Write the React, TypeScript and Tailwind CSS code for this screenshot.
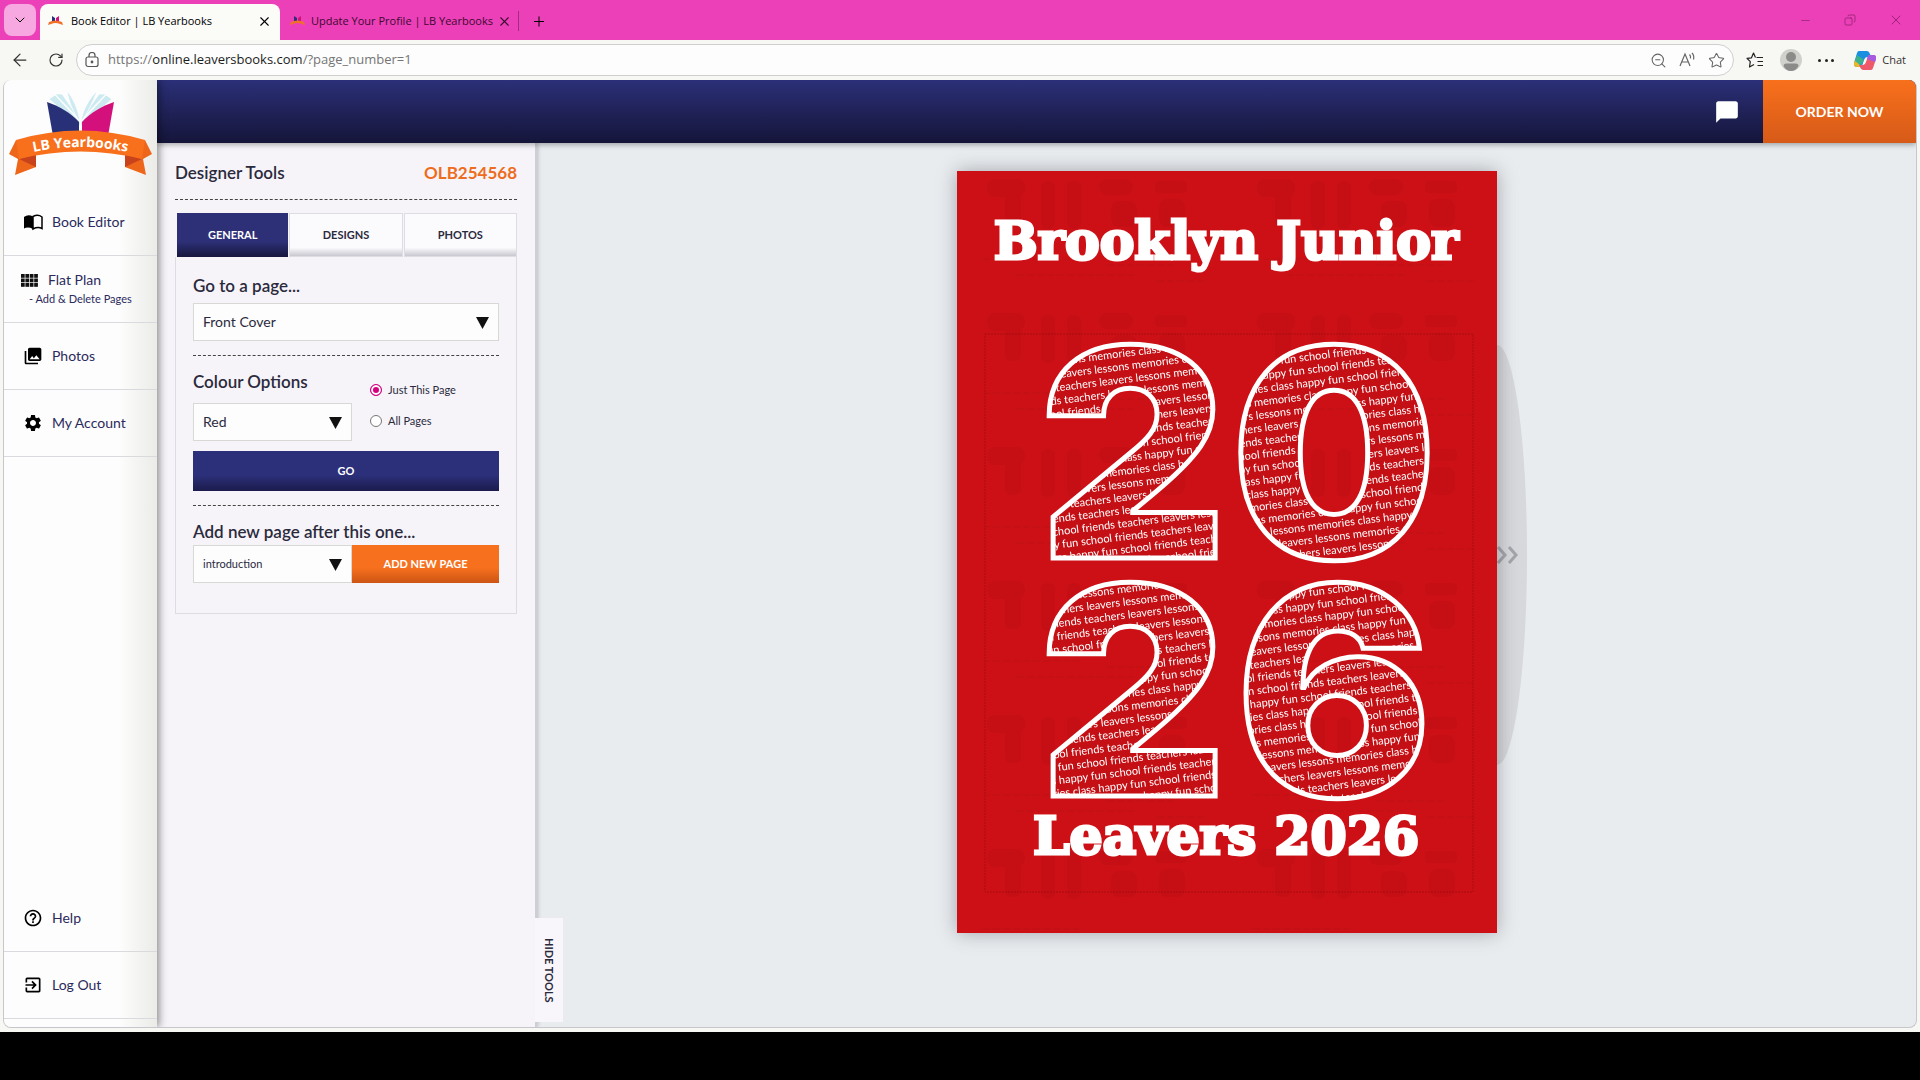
import { useState } from 'react';
import type { ReactNode } from 'react';
import { ArrowLeft, ChevronDown, Copy, Minus, Plus, RotateCw, Star, X, ZoomOut } from 'lucide-react';
import { MdChatBubble, MdExitToApp, MdHelpOutline, MdPhotoLibrary, MdSettings } from 'react-icons/md';

const WORDS = ['memories', 'class', 'happy', 'fun', 'school', 'friends', 'teachers', 'leavers', 'lessons'];
const ROWS = Array.from({ length: 42 }, (_, i) => i);

// each row starts one word earlier than the one above it
function wordRow(row: number) {
  const start = WORDS.length - (row % WORDS.length);
  return Array.from({ length: 14 }, (_, i) => WORDS[(start + i) % WORDS.length]).join(' ');
}

const TOOL_TABS = ['GENERAL', 'DESIGNS', 'PHOTOS'];

export default function App() {
  return (
    <div className="flex h-screen min-h-[800px] flex-col bg-black pb-12 font-['Lato',sans-serif] text-[#2b2a3d]">
      <TabStrip />
      <AddressBar />
      <div className="flex min-h-0 flex-1 bg-[#f7f7f3] px-[3px] pb-1">
        <div className="flex min-w-0 flex-1 overflow-hidden rounded-lg border border-t-0 border-[#c6c6cc] bg-[#e9ecef]">
          <Sidebar />
          <div className="flex min-w-0 flex-1 flex-col">
            <TopBar />
            <main className="flex min-h-0 flex-1">
              <DesignerTools />
              <Canvas />
            </main>
          </div>
        </div>
      </div>
    </div>
  );
}

function TabStrip() {
  return (
    <div className="flex h-10 shrink-0 items-end bg-[#ec40b8] font-['Open_Sans',sans-serif] text-[11px] text-black">
      <div className="flex h-10 w-10 items-center pl-1">
        <button aria-label="Tab actions" className="flex h-8 w-8 items-center justify-center rounded-lg bg-[#f7a8e0]">
          <ChevronDown size={16} strokeWidth={1.5} />
        </button>
      </div>
      <div className="flex h-9 w-60 items-center gap-2 rounded-t-lg bg-[#fbfbf8] px-2 pb-[2px]">
        <Favicon />
        <span className="flex-1 whitespace-nowrap">Book Editor | LB Yearbooks</span>
        <button aria-label="Close tab" className="flex w-4 justify-center">
          <X size={15} strokeWidth={1.75} />
        </button>
      </div>
      <div className="flex h-9 w-[238px] items-center gap-[6px] pb-[2px] pl-[10px] text-[#3d0a30]">
        <Favicon />
        <span className="whitespace-nowrap">Update Your Profile | LB Yearbooks</span>
        <button aria-label="Close tab" className="flex w-3 justify-center">
          <X size={15} strokeWidth={1.75} className="shrink-0" />
        </button>
      </div>
      <div className="flex h-9 items-center gap-3 pb-[2px]">
        <span className="h-5 w-px bg-[#a32a80]" />
        <button aria-label="New tab" className="flex w-4 justify-center">
          <Plus size={17} strokeWidth={1.5} />
        </button>
      </div>
      <div className="ml-auto flex h-10 items-center gap-8 pr-4 text-[#8f1d6e]">
        <button aria-label="Minimise"><Minus size={13} strokeWidth={1.25} /></button>
        <button aria-label="Restore"><Copy size={12} strokeWidth={1.5} className="-scale-x-100" /></button>
        <button aria-label="Close window"><X size={16} strokeWidth={1.25} /></button>
      </div>
    </div>
  );
}

function AddressBar() {
  return (
    <div className="flex h-10 shrink-0 items-center bg-[#f7f7f3] font-['Open_Sans',sans-serif] text-[#333]">
      <button aria-label="Back" className="flex w-10 justify-center">
        <ArrowLeft size={20} strokeWidth={1.5} />
      </button>
      <button aria-label="Refresh" className="mr-1 flex w-8 justify-center">
        <RotateCw size={16} strokeWidth={1.75} />
      </button>
      <div className="flex h-8 flex-1 items-center rounded-full border border-[#cfcfcf] bg-[#fdfdfd] px-2">
        <LockIcon />
        <a href="https://online.leaversbooks.com/?page_number=1" className="ml-[9px] text-[13px] text-[#757575]">
          https://<span className="text-[#1b1b1b]">online.leaversbooks.com</span>/?page_number=1
        </a>
        <div className="ml-auto flex items-center gap-3 text-[#666]">
          <button aria-label="Zoom out"><ZoomOut size={17} strokeWidth={1.5} /></button>
          <button aria-label="Read aloud"><ReadAloudIcon /></button>
          <button aria-label="Add to favourites"><Star size={17} strokeWidth={1.5} /></button>
        </div>
      </div>
      <div className="flex items-center gap-4 pl-3 pr-[14px]">
        <button aria-label="Favourites"><FavouritesIcon /></button>
        <button aria-label="Profile"><AvatarIcon /></button>
        <button aria-label="More" className="flex w-4 justify-between">
          <span className="h-[3px] w-[3px] rounded-full bg-[#222]" />
          <span className="h-[3px] w-[3px] rounded-full bg-[#222]" />
          <span className="h-[3px] w-[3px] rounded-full bg-[#222]" />
        </button>
        <button className="flex items-center gap-[6px] pl-1 text-[11px]">
          <CopilotIcon />
          Chat
        </button>
      </div>
    </div>
  );
}

function Sidebar() {
  return (
    <nav className="relative z-20 flex w-[153px] shrink-0 flex-col bg-gradient-to-r from-[#fdfdfd] from-75% to-[#ebebe8] text-sm text-[#2b2a5c] shadow-[2px_0_8px_rgba(0,0,0,0.45)]">
      <a href="#home" aria-label="LB Yearbooks" className="flex h-[109px] pl-[5px] pt-[10px]">
        <Logo />
      </a>
      <SideLink label="Book Editor" icon={<BookIcon />} />
      <a href="#flat-plan" className="flex h-[67px] flex-col justify-center border-b border-[#d9d9de] pl-[17px]">
        <span className="flex items-center gap-[10px]">
          <GridIcon />
          Flat Plan
        </span>
        <span className="pl-2 text-[11px] leading-[18px]">- Add &amp; Delete Pages</span>
      </a>
      <SideLink label="Photos" icon={<MdPhotoLibrary size={20} />} />
      <SideLink label="My Account" icon={<MdSettings size={20} />} />
      <div className="mb-2 mt-auto">
        <SideLink label="Help" icon={<MdHelpOutline size={20} />} />
        <SideLink label="Log Out" icon={<MdExitToApp size={20} />} />
      </div>
    </nav>
  );
}

function SideLink({ label, icon }: { label: string; icon: ReactNode }) {
  return (
    <a href={'#' + label} className="flex h-[67px] items-center gap-[9px] border-b border-[#d9d9de] pl-[19px]">
      <span className="text-black">{icon}</span>
      {label}
    </a>
  );
}

function TopBar() {
  return (
    <header className="z-10 flex h-[63px] shrink-0 justify-end bg-gradient-to-b from-[#2b3078] to-[#15153a] shadow-[0_2px_5px_rgba(0,0,0,0.3)]">
      <button aria-label="Messages" className="mr-[23px] text-white">
        <MdChatBubble size={26} />
      </button>
      <button className="w-[153px] bg-gradient-to-b from-[#f8701c] to-[#d65a18] text-sm font-bold text-white">
        ORDER NOW
      </button>
    </header>
  );
}

function DesignerTools() {
  const [tab, setTab] = useState('GENERAL');
  const [scope, setScope] = useState('page');

  return (
    <aside className="relative w-[380px] shrink-0 border-r-2 border-[#cfced6] bg-[#f6f4f8] px-[18px] pt-[17px] shadow-[1px_0_4px_rgba(0,0,0,0.2)]">
      <div className="flex items-center justify-between border-b border-dashed border-[#444] pb-[13px] leading-[26px]">
        <h1 className="text-[17px] font-semibold">Designer Tools</h1>
        <span className="text-[17px] font-bold text-[#ee6c20]">OLB254568</span>
      </div>

      <div className="mt-[13px] flex h-11 gap-px pl-[2px]">
        {TOOL_TABS.map((name) => (
          <button
            key={name}
            onClick={() => setTab(name)}
            className={
              tab === name
                ? 'flex-1 bg-gradient-to-b from-[#2d3077] from-65% to-[#17173f] text-[11px] font-bold text-white'
                : 'flex-1 border border-[#dedde4] bg-gradient-to-b from-[#fbfafc] from-80% to-[#c9c8d0] text-[11px] font-bold'
            }
          >
            {name}
          </button>
        ))}
      </div>

      <div className="border border-t-0 border-[#dddce2] px-[17px] pb-[30px]">
        <label htmlFor="goto" className="block pb-1 pt-4 text-[17px] font-semibold leading-[26px]">
          Go to a page...
        </label>
        <SelectBox id="goto" options={['Front Cover', 'Back Cover']} size="text-sm" />

        <div className="mt-[14px] flex justify-between border-t border-dashed border-[#444] pt-[13px]">
          <div className="w-[159px]">
            <label htmlFor="colour" className="mb-2 block text-[17px] font-semibold leading-[26px]">
              Colour Options
            </label>
            <SelectBox id="colour" options={['Red', 'Blue', 'Green']} size="text-sm" />
          </div>
          <div className="flex w-[129px] flex-col gap-[11px] pt-[11px] text-[11px]">
            <ScopeRadio id="this" label="Just This Page" checked={scope === 'page'} onPick={() => setScope('page')} />
            <ScopeRadio id="all" label="All Pages" checked={scope === 'all'} onPick={() => setScope('all')} />
          </div>
        </div>

        <button className="mt-[10px] h-10 w-full bg-gradient-to-b from-[#2c307a] from-60% to-[#1b1b4c] text-[11px] font-bold text-white">
          GO
        </button>

        <div className="mt-[14px] border-t border-dashed border-[#444] pt-[13px]">
          <label htmlFor="newpage" className="block text-[17px] font-semibold leading-[26px]">
            Add new page after this one...
          </label>
          <div className="flex">
            <div className="w-[159px]">
              <SelectBox id="newpage" options={['introduction', 'memories', 'autographs']} size="text-[11px]" />
            </div>
            <button className="flex-1 bg-gradient-to-b from-[#f7701d] from-60% to-[#cc5514] text-[11px] font-bold text-white">
              ADD NEW PAGE
            </button>
          </div>
        </div>
      </div>

      <button className="absolute bottom-[5px] left-full flex h-[104px] w-7 items-center justify-center bg-[#f8f6fa] text-[11px] font-bold [writing-mode:vertical-rl]">
        HIDE TOOLS
      </button>
    </aside>
  );
}

function SelectBox({ id, options, size }: { id: string; options: string[]; size: string }) {
  return (
    <div className="relative">
      <select
        id={id}
        className={'block h-[38px] w-full appearance-none border border-[#d8d8d4] bg-[#fdfdfd] px-[9px] ' + size}
      >
        {options.map((o) => (
          <option key={o}>{o}</option>
        ))}
      </select>
      <svg width="13" height="12" viewBox="0 0 13 12" className="pointer-events-none absolute right-[10px] top-[14px]">
        <path d="M0 0h13L6.500 12z" fill="#111" />
      </svg>
    </div>
  );
}

interface ScopeProps {
  id: string;
  label: string;
  checked: boolean;
  onPick: () => void;
}

function ScopeRadio({ id, label, checked, onPick }: ScopeProps) {
  return (
    <div className="flex h-5 items-center gap-[6px]">
      <input
        id={id}
        type="radio"
        name="scope"
        checked={checked}
        onChange={onPick}
        className="h-3 w-3 appearance-none rounded-full border border-[#777] bg-white checked:border-[#d6007f] checked:bg-[#d6007f] checked:shadow-[inset_0_0_0_2px_#fff]"
      />
      <label htmlFor={id}>{label}</label>
    </div>
  );
}

function Canvas() {
  return (
    <section className="min-w-0 flex-1 overflow-hidden pt-7">
      <div className="relative mx-auto w-[540px]">
        <button
          aria-label="Next page"
          className="absolute left-full top-[174px] flex h-[420px] w-[30px] items-center bg-[#d6d8db] text-[#a3a5ab] [border-radius:0_100%_100%_0_/_0_50%_50%_0]"
        >
          <svg width="22" height="18" viewBox="0 0 22 18" fill="none" stroke="currentColor" strokeWidth="3">
            <path d="M1 1l7 8-7 8M12 1l7 8-7 8" />
          </svg>
        </button>
        <Cover />
      </div>
    </section>
  );
}

function Cover() {
  return (
    <div className="relative bg-[#cd1016] shadow-[0_0_18px_rgba(60,60,70,0.4)]">
      <svg viewBox="0 0 540 762" className="block w-full">
        <defs>
          <clipPath id="year">
            <YearDigits />
          </clipPath>
          {/* faint worn texture of the cover */}
          <pattern id="wash" width="270" height="134" patternUnits="userSpaceOnUse">
            <g fill="#c50f15">
              <rect x="30" y="8" width="38" height="18" rx="8" />
              <rect x="48" y="20" width="16" height="36" rx="6" />
              <rect x="84" y="10" width="14" height="48" rx="6" />
              <rect x="110" y="10" width="14" height="48" rx="6" />
              <rect x="142" y="8" width="34" height="16" rx="8" />
              <rect x="154" y="30" width="26" height="26" rx="8" />
              <rect x="198" y="10" width="32" height="12" rx="4" />
              <rect x="202" y="28" width="26" height="28" rx="8" />
            </g>
            <g stroke="#bd0f14" strokeWidth="1" strokeDasharray="7 3">
              <path d="M26 88h96M150 94h70M60 104h120M200 110h50" />
            </g>
          </pattern>
        </defs>

        <rect width="540" height="762" fill="url(#wash)" />
        <rect x="28" y="163" width="488" height="558" fill="none" stroke="#a90c11" strokeDasharray="2 1" />

        <g clipPath="url(#year)">
          <rect x="70" y="160" width="410" height="480" fill="#c40f15" />
          <g transform="rotate(-7 270 400)" fill="#fff" fontFamily="Lato" fontSize="11">
            {ROWS.map((r) => (
              <text key={r} x={40 + (r % 3) * 6} y={136 + r * 13}>{wordRow(r)}</text>
            ))}
          </g>
        </g>
        <g fill="none" stroke="#fff" strokeWidth="5">
          <YearDigits />
        </g>

        <g fill="#fff" stroke="#fff" strokeWidth="3" fontFamily="DejaVu Serif" fontWeight="bold" textAnchor="middle">
          <text x="269" y="88" fontSize="52">Brooklyn Junior</text>
          <text x="269" y="683" fontSize="52">Leavers 2026</text>
        </g>
      </svg>
    </div>
  );
}

// a clipPath only takes text as a direct child, so no group here
function YearDigits() {
  const font = { fontFamily: 'Inter', fontWeight: 900, fontSize: 290, textAnchor: 'middle' } as const;
  return (
    <>
      <text x="176" y="387" {...font}>2</text>
      <text x="377" y="387" {...font}>0</text>
      <text x="176" y="625" {...font}>2</text>
      <text x="377" y="625" {...font}>6</text>
    </>
  );
}

function Logo() {
  return (
    <svg width="143" height="88" viewBox="0 0 143 88">
      <g fill="#cdeaf0" stroke="#fff" strokeWidth="0.7">
        <path d="M40 9L46 5L71 32L71 36Z" />
        <path d="M46 4L53 4L71 30Z" />
        <path d="M58 1C64 8 69 18 71 32C64 22 60 12 58 1Z" />
        <path d="M103 9L97 5L72 32L72 36Z" />
        <path d="M97 4L90 4L72 30Z" />
        <path d="M88 1C81 8 74 18 72 32C79 22 84 12 88 1Z" />
      </g>
      <path d="M38 12C50 16 62 23 70 32V46H44Z" fill="#283078" />
      <path d="M105 12C93 16 81 23 73 32V46H99Z" fill="#d3107c" />
      <path d="M7 50L0 64L9 69L6 85L27 77V64Z" fill="#ee661a" />
      <path d="M136 50L143 64L134 69L137 85L116 77V64Z" fill="#ee661a" />
      <path d="M10 69L27 64V77Z" fill="#c8421c" />
      <path d="M133 69L116 64V77Z" fill="#c8421c" />
      <path d="M7 50Q71 31 136 50L133 69Q71 54 10 69Z" fill="#f8701c" />
      <path id="ribbon" d="M12 65Q71 49 131 65" fill="none" />
      <text fill="#fff" fontFamily="Open Sans" fontWeight="bold" fontSize="14" textAnchor="middle">
        <textPath href="#ribbon" startOffset="50%">LB Yearbooks</textPath>
      </text>
    </svg>
  );
}

function Favicon() {
  return (
    <svg width="15" height="12" viewBox="0 0 15 12" className="shrink-0">
      <path d="M4 1l3 2v4H4z" fill="#283078" />
      <path d="M11 1L8 3v4h3z" fill="#d3107c" />
      <path d="M1 7Q7.500 4 14 7l1 3-3-1Q7.500 7 3 9l-3 1z" fill="#f0702a" />
    </svg>
  );
}

function BookIcon() {
  return (
    <svg width="20" height="20" viewBox="0 0 20 20">
      <path d="M1 5Q5 2 10 4.500V17Q5 14.500 1 16.500Z" fill="currentColor" />
      <path d="M10 4.500Q15 2 19 5V16.500Q15 14.500 10 17Z" fill="none" stroke="currentColor" strokeWidth="1.500" />
    </svg>
  );
}

function GridIcon() {
  return (
    <svg width="17" height="13" viewBox="0 0 17 13" fill="#111">
      {[0, 4.5, 9].map((y) =>
        [0, 4.4, 8.8, 13.2].map((x) => <rect key={x + '-' + y} x={x} y={y} width="3.7" height="3.8" />),
      )}
    </svg>
  );
}

function LockIcon() {
  return (
    <svg width="14" height="16" viewBox="0 0 14 16" fill="none" stroke="#555" strokeWidth="1.200">
      <rect x="1" y="5" width="12" height="9.500" rx="2" />
      <path d="M4 5V3.500a3 3 0 016 0V5" />
      <circle cx="7" cy="10" r="0.800" fill="#555" />
    </svg>
  );
}

function ReadAloudIcon() {
  return (
    <svg width="17" height="16" viewBox="0 0 17 16" fill="none" stroke="currentColor" strokeWidth="1.200">
      <path d="M1 14L6 2l5 12M3 10h6" />
      <path d="M10.500 2.500q1.500 1.500 1 4M13 1q2.500 2.500 1.500 6.500" />
    </svg>
  );
}

function FavouritesIcon() {
  return (
    <svg width="18" height="17" viewBox="0 0 18 17" fill="none" stroke="#222" strokeWidth="1.200" strokeLinejoin="round">
      <path d="M10.500 5.500H17M11.500 9.500H17M11.500 13.500H17" />
      <path d="M9.500 5.500L7.500 1L5.500 5.800L1 6.300l3.300 3.400L3.500 15l4.500-2.500" />
    </svg>
  );
}

function AvatarIcon() {
  return (
    <svg width="22" height="22" viewBox="0 0 22 22">
      <circle cx="11" cy="11" r="11" fill="#d0d0cd" />
      <circle cx="11" cy="8" r="5" fill="#8b8b89" />
      <path d="M3.500 17q0-2.500 3-2.500h9q3 0 3 2.500Q16 22 11 22T3.500 17z" fill="#8b8b89" />
    </svg>
  );
}

function CopilotIcon() {
  return (
    <svg width="22" height="21" viewBox="0 0 22 21">
      <path d="M5 1h8q2 0 3 3l1 3h-4q-2 0-3 3l-2 6q-.500 1-2 1H3q-4 0-3-4L3 3q.500-2 2-2z" fill="#1a8fe0" />
      <path d="M1 10l6 6q-.500 1-2 1H3q-4 0-3-4z" fill="#e8b82c" />
      <path d="M3 5l7 5-3 5-6-4z" fill="#3db28a" />
      <path d="M17 20H9q-2 0-3-3l-1-2h4q2 0 3-3l2-6q.500-1 2-1h3q4 0 3 4l-3 9q-.500 2-2 2z" fill="#ee5a6a" />
      <path d="M14 6q.500-1 2-1h3q4 0 3 4l-1 3-8-3z" fill="#a65be0" />
    </svg>
  );
}
